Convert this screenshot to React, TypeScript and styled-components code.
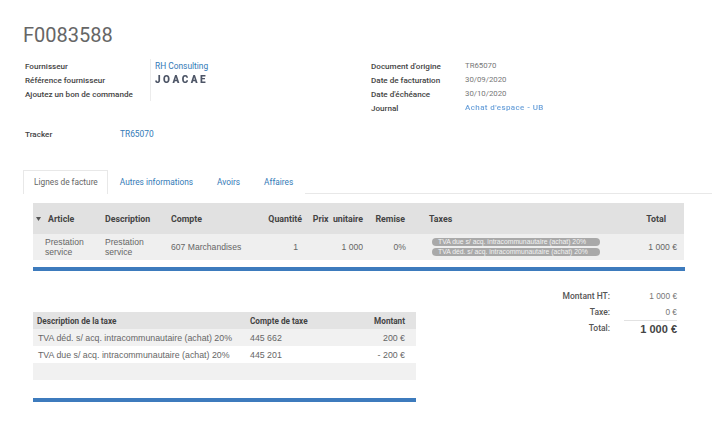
import styled, { createGlobalStyle } from 'styled-components';

const GlobalStyle = createGlobalStyle`
  body {
    margin: 0;
    background: #fff;
    font-family: Roboto, "Liberation Sans", sans-serif;
    color: #555;
  }
`;

const Sheet = styled.div`
  width: 720px;
  height: 426px;
  overflow: hidden;
  padding: 0 8px 0 23px;
  box-sizing: border-box;
`;

const Title = styled.h1`
  margin: 23px 0 0;
  font-size: 20px;
  line-height: 24px;
  font-weight: 400;
  color: #666;
`;

const InfoGrid = styled.div`
  display: grid;
  grid-template-columns: 346px 1fr;
  margin: 12px 0 0 2px;
`;

const FieldGroup = styled.div<{ $labelWidth: number }>`
  display: grid;
  grid-template-columns: ${p => p.$labelWidth}px 1fr;
  align-items: start;
`;

const Column = styled.div`
  display: flex;
  flex-direction: column;
`;

const Label = styled.div`
  height: 14px;
  line-height: 14px;
  font-size: 8.1px;
  font-weight: 500;
  color: #444;
  white-space: nowrap;
`;

const Values = styled(Column)<{ $divider?: boolean }>`
  ${p => p.$divider && `
    border-left: 1px solid #ececec;
    padding-left: 4px;
    min-height: 42px;
  `}
`;

const Value = styled.div<{ $link?: boolean }>`
  height: 14px;
  line-height: 14px;
  font-size: ${p => (p.$link ? '8.4px' : '7.8px')};
  color: ${p => (p.$link ? '#337ab7' : '#777')};
  white-space: nowrap;
`;

const Redacted = styled.span<{ $tone: string; $spacing: number; $size: number; $weight: number }>`
  display: inline-block;
  font-size: ${p => p.$size}px;
  font-weight: ${p => p.$weight};
  color: ${p => p.$tone};
  letter-spacing: ${p => p.$spacing}px;
  filter: blur(0.7px);
`;

const TrackerRow = styled(FieldGroup)`
  margin: 12px 0 0 2px;
`;

const TabBar = styled.nav`
  display: flex;
  margin-top: 29px;
  height: 23px;
  border-bottom: 1px solid #e8e8e8;
`;

const Tab = styled.div<{ $active?: boolean }>`
  padding: 0 11px;
  padding-left: ${p => (p.$active ? '10px' : '11px')};
  padding-right: ${p => (p.$active ? '9px' : '11px')};
  line-height: 23px;
  font-size: 8.3px;
  color: ${p => (p.$active ? '#666' : '#337ab7')};
  background: #fff;
  border: 1px solid ${p => (p.$active ? '#e8e8e8' : 'transparent')};
  border-bottom: none;
  margin-bottom: -1px;
  height: 24px;
  box-sizing: border-box;
`;

const LinesTable = styled.table`
  margin: 9px 0 0 10px;
  width: 651px;
  border-collapse: collapse;
  table-layout: fixed;
`;

const HeadCell = styled.th<{ $align?: string; $pl?: number; $pr?: number }>`
  height: 31px;
  padding: 0 ${p => p.$pr ?? 5}px 0 ${p => p.$pl ?? 5}px;
  background: #e1e1e1;
  text-align: ${p => p.$align ?? 'left'};
  font-size: 8.8px;
  font-weight: 700;
  color: #444;
  white-space: nowrap;
`;

const Cell = styled.td<{ $align?: string; $pl?: number; $pr?: number }>`
  height: 26px;
  padding: 0 ${p => p.$pr ?? 5}px 0 ${p => p.$pl ?? 5}px;
  background: #efefef;
  text-align: ${p => p.$align ?? 'left'};
  font-family: "Liberation Sans", Arial, sans-serif;
  font-size: 8.6px;
  line-height: 10px;
  color: #666;
  vertical-align: middle;
`;

const SortArrow = styled.svg`
  width: 5px;
  height: 4px;
  margin-right: 7px;
  vertical-align: 1px;
`;

const BadgeStack = styled.div`
  display: flex;
  flex-direction: column;
  gap: 2px;
  padding-left: 3px;
`;

const Badge = styled.span`
  display: block;
  width: 168px;
  height: 8px;
  box-sizing: border-box;
  padding: 0 6px;
  border-radius: 4px;
  background: #a9a9a9;
  color: #f3f3f3;
  font-family: "Liberation Sans", Arial, sans-serif;
  font-size: 6.8px;
  line-height: 8px;
  white-space: nowrap;
  overflow: hidden;
`;

const BlueBar = styled.div<{ $width: number; $top: number }>`
  width: ${p => p.$width}px;
  height: 4px;
  margin: ${p => p.$top}px 0 0 10px;
  background: #3d7bbd;
`;

const Footer = styled.div`
  display: flex;
  justify-content: space-between;
  align-items: flex-start;
  margin-top: 17px;
`;

const TaxColumn = styled.div`
  margin-top: 24px;
`;

const TaxTable = styled.table`
  margin-left: 10px;
  width: 383px;
  border-collapse: collapse;
  table-layout: fixed;
`;

const TaxHead = styled.th<{ $align?: string; $pl?: number; $pr?: number }>`
  height: 17px;
  padding: 0 ${p => p.$pr ?? 4}px 0 ${p => p.$pl ?? 4}px;
  background: #e3e3e3;
  text-align: ${p => p.$align ?? 'left'};
  font-size: 8.2px;
  font-weight: 700;
  color: #444;
  white-space: nowrap;
`;

const TaxRow = styled.tr<{ $shade?: boolean }>`
  background: ${p => (p.$shade ? '#f1f1f1' : '#fff')};
`;

const TaxCell = styled.td<{ $align?: string; $pl?: number; $pr?: number }>`
  height: 17px;
  padding: 0 ${p => p.$pr ?? 4}px 0 ${p => p.$pl ?? 4}px;
  text-align: ${p => p.$align ?? 'left'};
  font-family: "Liberation Sans", Arial, sans-serif;
  font-size: 8.8px;
  color: #666;
  white-space: nowrap;
`;

const Totals = styled.div`
  display: grid;
  grid-template-columns: auto 53px;
  column-gap: 14px;
  margin-right: 35px;
`;

const TotalLabel = styled.div`
  line-height: 16px;
  font-size: 8.5px;
  font-weight: 500;
  color: #555;
  text-align: right;
  white-space: nowrap;
`;

const TotalValue = styled.div<{ $grand?: boolean }>`
  line-height: 16px;
  text-align: right;
  font-family: "Liberation Sans", Arial, sans-serif;
  font-size: ${p => (p.$grand ? '11px' : '8.3px')};
  font-weight: ${p => (p.$grand ? 700 : 400)};
  color: ${p => (p.$grand ? '#444' : '#777')};
  white-space: nowrap;
  ${p => p.$grand && 'border-top: 1px solid #e2e2e2;'}
`;

const taxRows = [
  { desc: 'TVA déd. s/ acq. intracommunautaire (achat) 20%', account: '445 662', amount: '200 €' },
  { desc: 'TVA due s/ acq. intracommunautaire (achat) 20%', account: '445 201', amount: '- 200 €' },
];

const App = () => (
  <Sheet>
    <GlobalStyle />
    <Title>F0083588</Title>

    <InfoGrid>
      <FieldGroup $labelWidth={125}>
        <Column>
          <Label>Fournisseur</Label>
          <Label>Référence fournisseur</Label>
          <Label>Ajoutez un bon de commande</Label>
        </Column>
        <Values $divider>
          <Value $link>RH Consulting</Value>
          <Value>
            <Redacted $tone="#4d5566" $spacing={2.5} $size={10} $weight={900}>JOACAE</Redacted>
          </Value>
        </Values>
      </FieldGroup>
      <FieldGroup $labelWidth={94}>
        <Column>
          <Label>Document d'origine</Label>
          <Label>Date de facturation</Label>
          <Label>Date d'échéance</Label>
          <Label>Journal</Label>
        </Column>
        <Values>
          <Value>TR65070</Value>
          <Value>30/09/2020</Value>
          <Value>30/10/2020</Value>
          <Value>
            <Redacted $tone="#6ea3db" $spacing={0.4} $size={8} $weight={500}>Achat d'espace - UB</Redacted>
          </Value>
        </Values>
      </FieldGroup>
    </InfoGrid>

    <TrackerRow $labelWidth={95}>
      <Label>Tracker</Label>
      <Value $link>TR65070</Value>
    </TrackerRow>

    <TabBar>
      <Tab $active>Lignes de facture</Tab>
      <Tab>Autres informations</Tab>
      <Tab>Avoirs</Tab>
      <Tab>Affaires</Tab>
    </TabBar>

    <LinesTable>
      <colgroup>
        <col style={{ width: 67 }} />
        <col style={{ width: 66 }} />
        <col style={{ width: 84 }} />
        <col style={{ width: 57 }} />
        <col style={{ width: 61 }} />
        <col style={{ width: 43 }} />
        <col style={{ width: 209 }} />
        <col style={{ width: 64 }} />
      </colgroup>
      <thead>
        <tr>
          <HeadCell $pl={3}>
            <SortArrow viewBox="0 0 5 4"><path d="M0 0h5L2.5 4z" fill="#555" /></SortArrow>
            Article
          </HeadCell>
          <HeadCell>Description</HeadCell>
          <HeadCell>Compte</HeadCell>
          <HeadCell $align="right">Quantité</HeadCell>
          <HeadCell $align="right">Prix&nbsp; unitaire</HeadCell>
          <HeadCell $align="right" $pr={6}>Remise</HeadCell>
          <HeadCell $pl={18}>Taxes</HeadCell>
          <HeadCell $align="right" $pr={18}>Total</HeadCell>
        </tr>
      </thead>
      <tbody>
        <tr>
          <Cell $pl={12}>Prestation<br />service</Cell>
          <Cell>Prestation<br />service</Cell>
          <Cell>607 Marchandises</Cell>
          <Cell $align="right" $pr={9}>1</Cell>
          <Cell $align="right">1 000</Cell>
          <Cell $align="right">0%</Cell>
          <Cell $pl={18}>
            <BadgeStack>
              <Badge>TVA due s/ acq. intracommunautaire (achat) 20%</Badge>
              <Badge>TVA déd. s/ acq. intracommunautaire (achat) 20%</Badge>
            </BadgeStack>
          </Cell>
          <Cell $align="right" $pr={7}>1 000 €</Cell>
        </tr>
      </tbody>
    </LinesTable>
    <BlueBar $width={652} $top={7} />

    <Footer>
      <TaxColumn>
        <TaxTable>
          <colgroup>
            <col style={{ width: 213 }} />
            <col style={{ width: 100 }} />
            <col style={{ width: 70 }} />
          </colgroup>
          <thead>
            <tr>
              <TaxHead>Description de la taxe</TaxHead>
              <TaxHead>Compte de taxe</TaxHead>
              <TaxHead $align="right" $pr={11}>Montant</TaxHead>
            </tr>
          </thead>
          <tbody>
            {taxRows.map((row, i) => (
              <TaxRow key={row.account} $shade={i % 2 === 0}>
                <TaxCell $pl={5}>{row.desc}</TaxCell>
                <TaxCell>{row.account}</TaxCell>
                <TaxCell $align="right" $pr={11}>{row.amount}</TaxCell>
              </TaxRow>
            ))}
            <TaxRow $shade>
              <TaxCell />
              <TaxCell />
              <TaxCell />
            </TaxRow>
          </tbody>
        </TaxTable>
        <BlueBar $width={383} $top={18} />
      </TaxColumn>

      <Totals>
        <TotalLabel>Montant HT:</TotalLabel>
        <TotalValue>1 000 €</TotalValue>
        <TotalLabel>Taxe:</TotalLabel>
        <TotalValue>0 €</TotalValue>
        <TotalLabel>Total:</TotalLabel>
        <TotalValue $grand>1 000 €</TotalValue>
      </Totals>
    </Footer>
  </Sheet>
);

export default App;
